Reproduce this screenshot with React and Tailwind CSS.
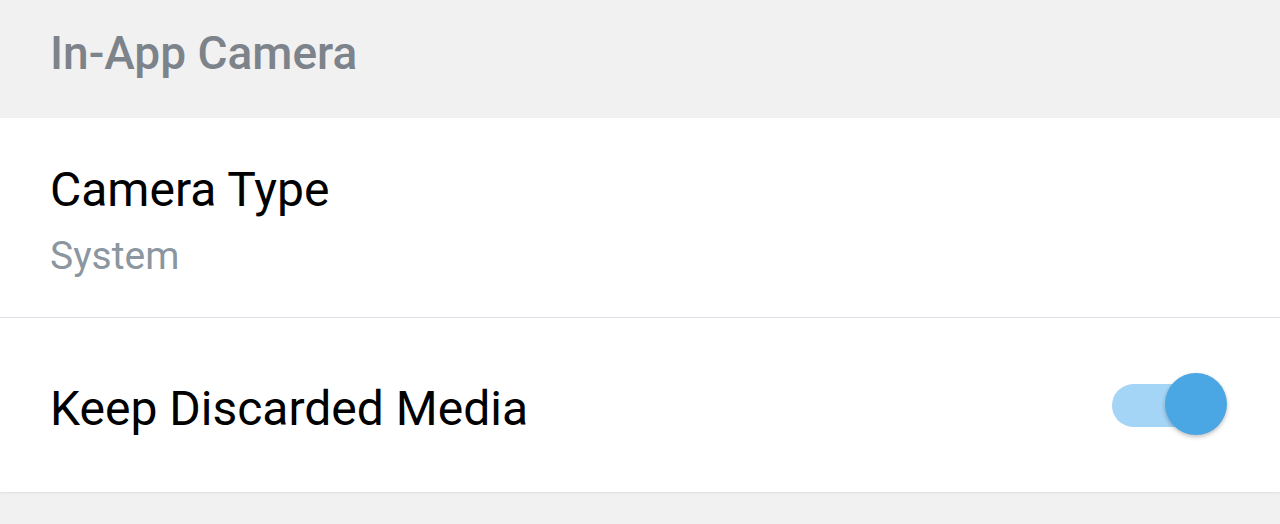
export default function App() {
  return (
    <div className="w-[1280px] h-[524px] bg-[#f1f1f1] overflow-hidden" style={{ fontFamily: 'Roboto, "Noto Sans", sans-serif' }}>
      {/* Section header */}
      <div className="h-[118px] flex items-center pl-[50px]">
        <h2 className="text-[46px] font-medium text-[#7d838a] leading-none pb-[12px]">In-App Camera</h2>
      </div>

      <div className="bg-white shadow-[0_1px_2px_rgba(0,0,0,0.08)]">
        {/* Camera type */}
        <div className="h-[200px] flex flex-col justify-center pl-[50px] pt-[6px] border-b border-[#dde3e8]">
          <p className="text-[48px] text-black leading-none">Camera Type</p>
          <p className="text-[39px] text-[#8b96a1] leading-none mt-[23px]">System</p>
        </div>

        {/* Keep discarded media */}
        <div className="h-[174px] flex items-center justify-between pl-[50px] pr-[53px]">
          <p className="text-[48px] text-black leading-none pt-[8px]">Keep Discarded Media</p>
          <div className="relative w-[115px] h-[64px] flex items-center">
            <div className="w-[100px] h-[43px] rounded-full bg-[#a4d4f6]" />
            <div className="absolute right-0 top-0 w-[62px] h-[62px] rounded-full bg-[#4aa7e4] shadow-[0_2px_4px_rgba(0,0,0,0.25)]" />
          </div>
        </div>
      </div>
    </div>
  );
}
